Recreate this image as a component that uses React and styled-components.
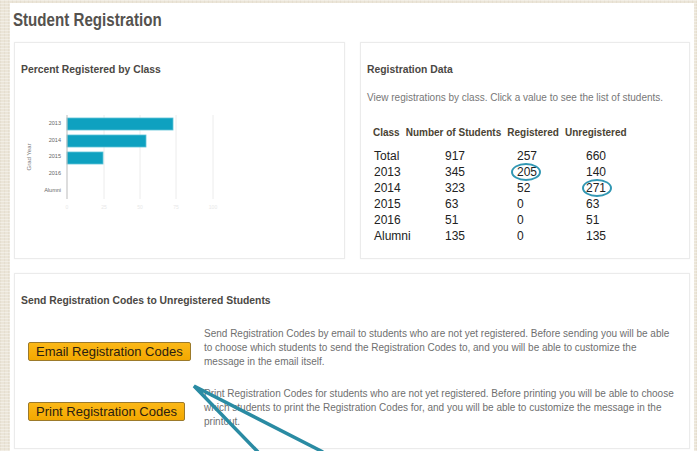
import React from 'react'
import styled, { createGlobalStyle } from 'styled-components'

const GlobalStyle = createGlobalStyle`
  html, body {
    margin: 0;
    padding: 0;
  }
  body {
    width: 697px;
    height: 451px;
    overflow: hidden;
    background-color: #ebe5d8;
    background-image:
      repeating-linear-gradient(0deg, rgba(255,255,255,0.35) 0 1px, transparent 1px 3px),
      repeating-linear-gradient(90deg, rgba(160,140,110,0.08) 0 1px, transparent 1px 4px);
    font-family: "Liberation Sans", Arial, sans-serif;
  }
`

const Stage = styled.div`
  position: relative;
  width: 697px;
  height: 451px;
  overflow: hidden;
`

const Page = styled.div`
  margin: 3px 3px 0 10px;
  height: 448px;
  padding: 0 4px;
  box-sizing: border-box;
  background: #fff;
  display: flex;
  flex-direction: column;
`

/* bold narrow headings: Arial bold squeezed to a condensed width */
const Heading = styled.h1`
  margin: 6px 0 11px -1px;
  font-family: "Liberation Sans", Arial, sans-serif;
  font-weight: 700;
  font-size: 18px;
  line-height: 22px;
  color: #55524e;
  transform: scaleX(0.84);
  transform-origin: 0 0;
  white-space: nowrap;
`

const TopRow = styled.div`
  display: grid;
  grid-template-columns: 331px 330px;
  gap: 15px;
`

const Panel = styled.section`
  border: 1px solid #ebebeb;
  box-shadow: 0 0 2px rgba(0, 0, 0, 0.04);
  background: #fff;
  height: ${p => p.h}px;
  box-sizing: border-box;
  padding: 19px 6px 0;
  margin-top: ${p => p.mt || 0}px;
`

const PanelTitle = styled.h2`
  margin: 0;
  font-family: "Liberation Sans", Arial, sans-serif;
  font-weight: 700;
  font-size: 11.5px;
  line-height: 14px;
  color: #4b4844;
  transform: scaleX(0.9);
  transform-origin: 0 0;
  white-space: nowrap;
`

const Chart = styled.svg`
  display: block;
  margin-top: 10px;
`

const Note = styled.p`
  margin: 15px 0 0;
  font-size: 10px;
  line-height: 13px;
  color: #777;
`

const HeadRow = styled.div`
  display: flex;
  gap: 6px;
  margin: 23px 0 0 6px;
  font-size: 10px;
  font-weight: 700;
  line-height: 12px;
  color: #4a4333;
`

const DataGrid = styled.div`
  display: grid;
  grid-template-columns: 71px 72px 69px auto;
  margin: 9px 0 0 7px;
  font-size: 12px;
  line-height: 16px;
  color: #222;
`

const Circled = styled.span`
  position: relative;
  &::after {
    content: "";
    position: absolute;
    left: ${p => p.l}px;
    right: ${p => p.r}px;
    top: -2px;
    bottom: -2px;
    border: 2px solid #3197b3;
    border-radius: 50%;
  }
`

const ActionList = styled.div`
  display: flex;
  flex-direction: column;
  gap: 18px;
  margin-top: 20px;
  padding-left: 7px;
`

const Action = styled.div`
  display: grid;
  grid-template-columns: 176px 470px;
  align-items: center;
`

const OrangeButton = styled.button`
  justify-self: start;
  margin-top: 6px;
  height: 19px;
  padding: 0 7px;
  border: 1px solid #9c7a2a;
  border-radius: 2px;
  background: linear-gradient(#fbb818, #f3a800);
  font-family: "Liberation Sans", Arial, sans-serif;
  font-size: 13px;
  line-height: 17px;
  color: #2a2010;
`

const ActionText = styled.p`
  margin: 0;
  font-size: 10px;
  line-height: 14px;
  color: #6f6f6f;
`

const Pointer = styled.svg`
  position: absolute;
  left: 0;
  top: 0;
  pointer-events: none;
`

const bars = [
  { label: '2013', width: 106 },
  { label: '2014', width: 79 },
  { label: '2015', width: 36 },
  { label: '2016', width: 0 },
  { label: 'Alumni', width: 0 },
]

const rows = [
  ['Total', '917', '257', '660'],
  ['2013', '345', '205', '140'],
  ['2014', '323', '52', '271'],
  ['2015', '63', '0', '63'],
  ['2016', '51', '0', '51'],
  ['Alumni', '135', '0', '135'],
]

// rings drawn around highlighted cells, keyed row-column
const circled = {
  '1-2': { l: -6, r: -4 },
  '2-3': { l: -4, r: -6 },
}

const ClassChart = () => (
  <Chart width="300" height="140" viewBox="0 0 300 140">
    {[83, 119, 155, 192].map(x => (
      <line key={x} x1={x} y1="29" x2={x} y2="113" stroke="#ececec" strokeWidth="1" />
    ))}
    {bars.map((b, i) => (
      <g key={b.label}>
        <text x="40" y={39 + i * 16.7} textAnchor="end" fontSize="5.5" fill="#666" fontFamily="Liberation Sans, sans-serif">
          {b.label}
        </text>
        {b.width > 0 && (
          <rect x="46" y={32 + i * 17} width={b.width} height="12" fill="#0ea1c0" stroke="#5cc3d8" strokeWidth="0.8" />
        )}
      </g>
    ))}
    <line x1="46" y1="29" x2="46" y2="113" stroke="#bbb" strokeWidth="1" />
    <text
      x="10"
      y="71"
      transform="rotate(-90 10 71)"
      textAnchor="middle"
      fontSize="6"
      fill="#777"
      fontFamily="Liberation Sans, sans-serif"
    >
      Grad Year
    </text>
    {[['0', 46], ['25', 83], ['50', 119], ['75', 155], ['100', 192]].map(([t, x]) => (
      <text key={t} x={x} y="123" textAnchor="middle" fontSize="5" fill="#e8e8e8" fontFamily="Liberation Sans, sans-serif">
        {t}
      </text>
    ))}
  </Chart>
)

export default function App() {
  return (
    <Stage>
      <GlobalStyle />
      <Page>
        <Heading>Student Registration</Heading>
        <TopRow>
          <Panel h={217}>
            <PanelTitle>Percent Registered by Class</PanelTitle>
            <ClassChart />
          </Panel>
          <Panel h={217}>
            <PanelTitle>Registration Data</PanelTitle>
            <Note>View registrations by class. Click a value to see the list of students.</Note>
            <HeadRow>
              <span>Class</span>
              <span>Number of Students</span>
              <span>Registered</span>
              <span>Unregistered</span>
            </HeadRow>
            <DataGrid>
              {rows.map((row, r) =>
                row.map((cell, c) => {
                  const ring = circled[`${r}-${c}`]
                  return (
                    <span key={`${r}-${c}`}>
                      {ring ? <Circled l={ring.l} r={ring.r}>{cell}</Circled> : cell}
                    </span>
                  )
                })
              )}
            </DataGrid>
          </Panel>
        </TopRow>
        <Panel h={176} mt={14}>
          <PanelTitle>Send Registration Codes to Unregistered Students</PanelTitle>
          <ActionList>
            <Action>
              <OrangeButton>Email Registration Codes</OrangeButton>
              <ActionText>
                Send Registration Codes by email to students who are not yet registered. Before sending you will be able
                to choose which students to send the Registration Codes to, and you will be able to customize the
                message in the email itself.
              </ActionText>
            </Action>
            <Action>
              <OrangeButton>Print Registration Codes</OrangeButton>
              <ActionText>
                Print Registration Codes for students who are not yet registered. Before printing you will be able to choose
                which students to print the Registration Codes for, and you will be able to customize the message in the
                printout.
              </ActionText>
            </Action>
          </ActionList>
        </Panel>
      </Page>
      <Pointer width="697" height="451" viewBox="0 0 697 451">
        <path d="M258 452 L194 386 L323 452" fill="none" stroke="#2a8ba3" strokeWidth="3.5" strokeLinejoin="miter" />
      </Pointer>
    </Stage>
  )
}
